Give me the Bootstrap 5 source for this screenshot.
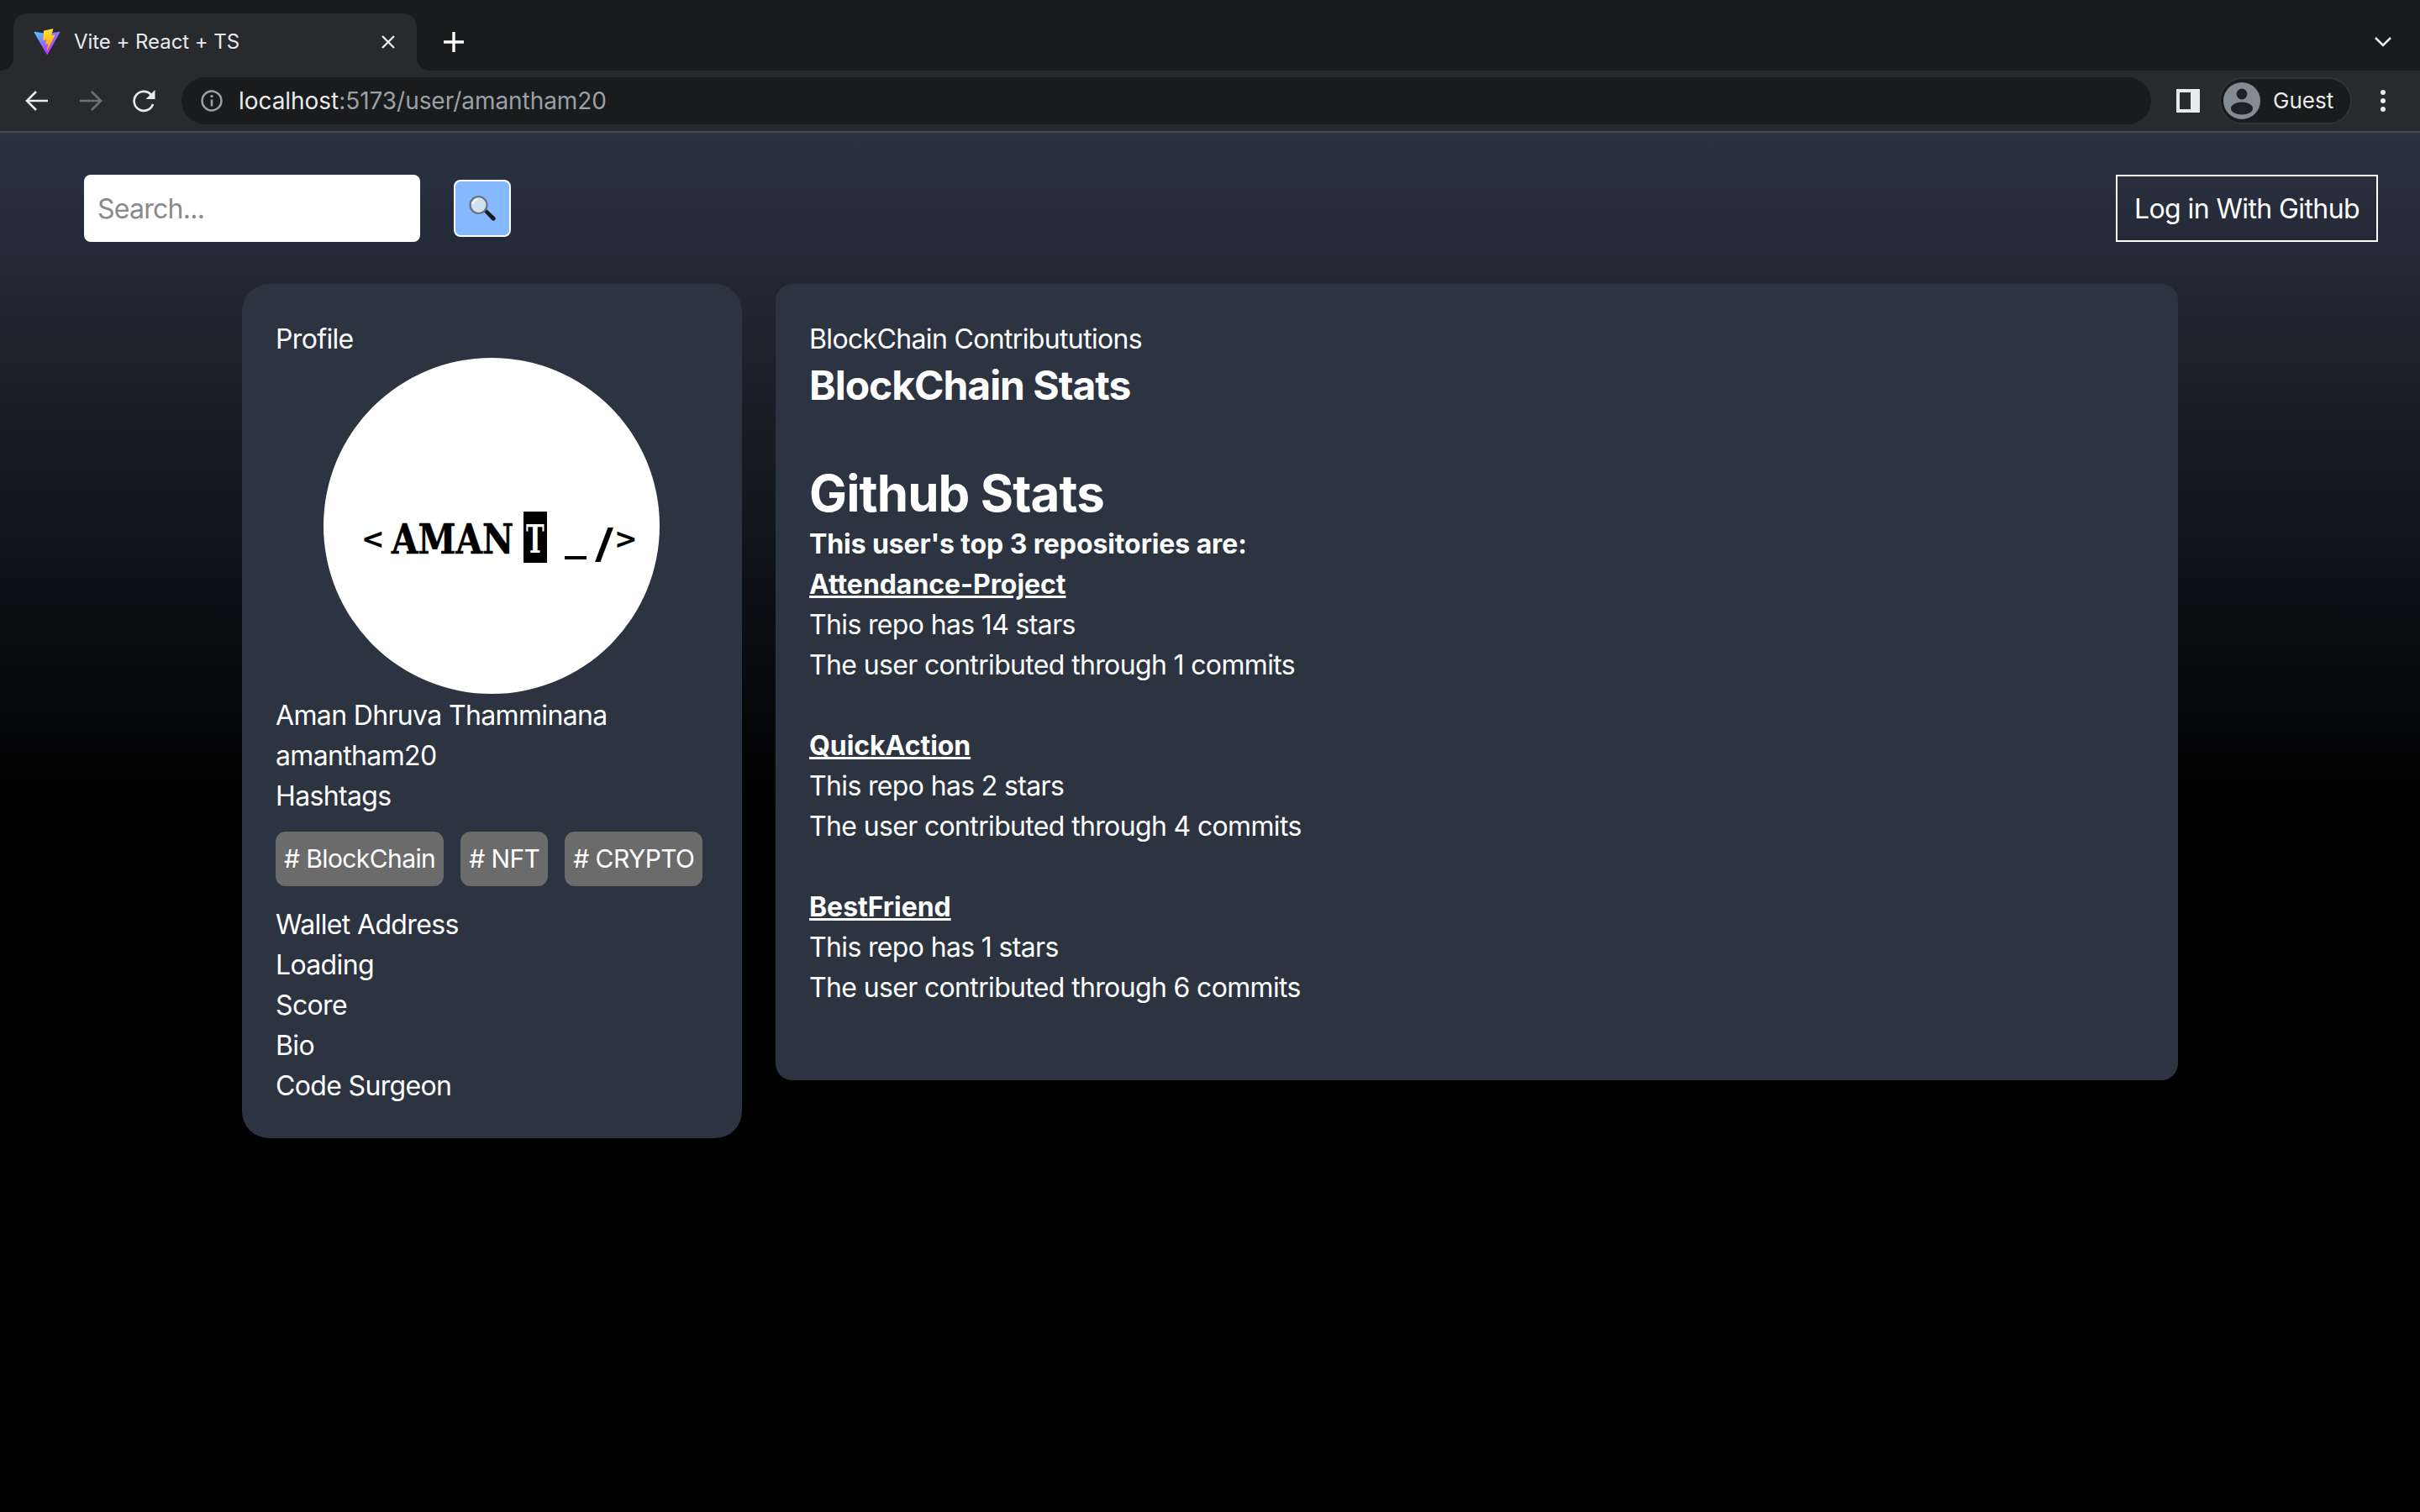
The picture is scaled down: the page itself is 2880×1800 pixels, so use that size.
<!DOCTYPE html>
<html lang="en">
<head>
  <meta charset="UTF-8">
  <title>Vite + React + TS</title>
  <link href="https://cdn.jsdelivr.net/npm/bootstrap@5.3.0/dist/css/bootstrap.min.css" rel="stylesheet">
  <style>
    html, body { height: 100%; }
    body {
      background: #000;
      color: #fff;
      font-family: Inter, "Liberation Sans", sans-serif;
      font-size: 32px;
      line-height: 48px;
      letter-spacing: -0.65px;
    }
    .browser-tabs { height: 84px; background: #1a1b1d; padding-left: 16px; }
    .browser-tab {
      position: relative;
      width: 480px;
      height: 68px;
      background: #292a2d;
      border-radius: 16px 16px 0 0;
      padding: 0 24px;
      gap: 16px;
      font-size: 24px;
      letter-spacing: -0.05px;
      color: #e8eaed;
    }
    .browser-tab::before, .browser-tab::after {
      content: "";
      position: absolute;
      bottom: 0;
      width: 16px;
      height: 16px;
    }
    .browser-tab::before { left: -16px; background: radial-gradient(circle at 0 0, #1a1b1d 16px, #292a2d 16.5px); }
    .browser-tab::after { right: -16px; background: radial-gradient(circle at 100% 0, #1a1b1d 16px, #292a2d 16.5px); }
    .tab-close { margin-left: auto; }
    .new-tab { margin-left: 30px; margin-bottom: 20px; }
    .tab-list { margin-left: auto; margin-right: 32px; margin-bottom: 26px; }
    .browser-bar {
      height: 74px;
      background: #292a2d;
      border-bottom: 2px solid #4a4b4e;
      padding: 0 26px 0 28px;
    }
    .nav-icon { width: 32px; height: 32px; margin-right: 32px; flex: none; }
    .omnibox {
      width: 2344px;
      height: 56px;
      margin-left: -4px;
      border-radius: 28px;
      background: #1a1b1d;
      padding-left: 22px;
      gap: 18px;
      font-size: 28px;
      letter-spacing: -0.05px;
      color: #9aa0a6;
    }
    .omnibox b { font-weight: 400; color: #e8eaed; }
    .side-panel { margin-left: 30px; flex: none; }
    .guest-pill {
      margin-left: 23px;
      width: 158px;
      height: 56px;
      border-radius: 28px;
      background: #1a1b1d;
      border: 2px solid #313235;
      padding-left: 3px;
      gap: 15px;
      font-size: 26px;
      letter-spacing: 0;
      color: #e8eaed;
    }
    .browser-menu { margin-left: 33px; flex: none; }

    .page-area {
      height: 1642px;
      background: linear-gradient(180deg, #2b3242 0, #000 800px);
    }
    .top-row { padding: 50px 50px 0 100px; }
    .search-box.form-control {
      width: 400px;
      height: 80px;
      padding: 16px;
      font-size: 32px;
      line-height: 48px;
      letter-spacing: -0.75px;
      border: 0;
      border-radius: 8px;
    }
    .search-box.form-control::placeholder { color: #8a8a8a; }
    .search-btn.btn {
      width: 68px;
      height: 68px;
      margin-left: 40px;
      padding: 0;
      background: #85b8ff;
      border: 2px solid #fff;
      border-radius: 8px;
    }
    .login-btn.btn {
      width: 312px;
      height: 80px;
      padding: 2px 0 0;
      color: #fff;
      background: transparent;
      border: 2px solid #fff;
      border-radius: 0;
      font-size: 32px;
      letter-spacing: -0.6px;
    }
    .cards-row { width: 2304px; margin: 50px auto 0; gap: 40px; }
    .info-card.card {
      background: #2d3441;
      color: #fff;
      border: 0;
      border-radius: 20px;
      padding: 40px;
    }
    .profile-card.card { width: 595px; border-radius: 32px; flex: none; }
    .text-line { height: 48px; line-height: 51px; }
    .avatar-img { display: block; width: 400px; height: 400px; margin-left: 57px; }
    .hash-tag {
      background: #6b6b6b;
      border-radius: 12px;
      padding: 8px 10px;
      font-size: 30px;
      letter-spacing: -0.6px;
      line-height: 49px;
      white-space: nowrap;
    }
    .tag-row { gap: 20px; margin: 20px 0; }
    .stats-title { height: 64px; font-size: 48px; line-height: 66px; letter-spacing: -1.05px; font-weight: 700; margin: 0 0 52px; }
    .github-title { height: 80px; font-size: 60px; line-height: 90px; letter-spacing: -0.9px; font-weight: 700; margin: 0; }
    .top-line { font-weight: 700; letter-spacing: -0.1px; }
    .repo-link { color: #fff; font-weight: 700; letter-spacing: -0.05px; text-decoration: underline; }
    .repo-block { margin-bottom: 48px; }
    .logo-word { font-family: "DejaVu Serif", serif; font-weight: 700; letter-spacing: 0; }
    .logo-sign { font-family: "DejaVu Sans", sans-serif; font-weight: 700; letter-spacing: 0; }
  </style>
</head>
<body>
  <div class="browser-tabs d-flex align-items-end">
    <div class="browser-tab d-flex align-items-center">
      <svg width="32" height="32" viewBox="0 0 410 404" fill="none">
        <path d="M399.641 59.5246L215.643 388.545C211.844 395.338 202.084 395.378 198.228 388.618L10.5817 59.5563C6.38087 52.1896 12.6802 43.2665 21.0281 44.7586L205.223 77.6824C206.398 77.8924 207.601 77.8904 208.776 77.6763L389.119 44.8058C397.439 43.2894 403.768 52.1434 399.641 59.5246Z" fill="url(#viteA)"/>
        <path d="M292.965 1.5744L156.801 28.2552C154.563 28.6937 152.906 30.5903 152.771 32.8664L144.395 174.33C144.198 177.662 147.258 180.248 150.51 179.498L188.42 170.749C191.967 169.931 195.172 173.055 194.443 176.622L183.18 231.775C182.422 235.487 185.907 238.661 189.532 237.56L212.947 230.446C216.577 229.344 220.065 232.527 219.297 236.242L201.398 322.875C200.278 328.294 207.486 331.249 210.492 326.603L212.5 323.5L323.454 102.072C325.312 98.3645 322.108 94.137 318.036 94.9228L279.014 102.454C275.347 103.161 272.227 99.746 273.262 96.1583L298.731 7.86689C299.767 4.27314 296.636 0.855181 292.965 1.5744Z" fill="url(#viteB)"/>
        <defs>
          <linearGradient id="viteA" x1="6" y1="33" x2="235" y2="344" gradientUnits="userSpaceOnUse"><stop stop-color="#41D1FF"/><stop offset="1" stop-color="#BD34FE"/></linearGradient>
          <linearGradient id="viteB" x1="194" y1="8.8" x2="236" y2="292" gradientUnits="userSpaceOnUse"><stop stop-color="#FFEA83"/><stop offset="0.08" stop-color="#FFDD35"/><stop offset="1" stop-color="#FFA800"/></linearGradient>
        </defs>
      </svg>
      <span>Vite + React + TS</span>
      <svg class="tab-close" width="20" height="20" viewBox="0 0 20 20"><path d="M3 3l14 14M17 3L3 17" stroke="#e8eaed" stroke-width="2.4"/></svg>
    </div>
    <svg class="new-tab" width="28" height="28" viewBox="0 0 28 28"><path d="M14 2v24M2 14h24" stroke="#fff" stroke-width="3.4"/></svg>
    <svg class="tab-list" width="24" height="16" viewBox="0 0 24 16"><path d="M3 3l9 9 9-9" fill="none" stroke="#e8eaed" stroke-width="2.6"/></svg>
  </div>

  <div class="browser-bar d-flex align-items-center">
    <svg class="nav-icon" viewBox="0 0 32 32"><path d="M29 16H5M15 5L4 16l11 11" fill="none" stroke="#e8eaed" stroke-width="2.6"/></svg>
    <svg class="nav-icon" viewBox="0 0 32 32"><path d="M3 16h24M17 5l11 11-11 11" fill="none" stroke="#6f7073" stroke-width="2.6"/></svg>
    <svg class="nav-icon" viewBox="0 0 32 32"><path d="M26 20a11.5 11.5 0 1 1-2.5-11.5L27 12" fill="none" stroke="#e8eaed" stroke-width="2.6"/><path d="M28.5 3v11h-11z" fill="#e8eaed"/></svg>
    <div class="omnibox d-flex align-items-center">
      <svg width="28" height="28" viewBox="0 0 28 28" class="flex-none"><circle cx="14" cy="14" r="11.5" fill="none" stroke="#9aa0a6" stroke-width="2.4"/><path d="M14 12.5v8" stroke="#9aa0a6" stroke-width="2.6"/><circle cx="14" cy="8.6" r="1.7" fill="#9aa0a6"/></svg>
      <span><b>localhost</b>:5173/user/amantham20</span>
    </div>
    <svg class="side-panel" width="28" height="28" viewBox="0 0 28 28"><path fill-rule="evenodd" d="M0 0h28v28H0zM4 4v20h13V4z" fill="#e8eaed"/></svg>
    <div class="guest-pill d-flex align-items-center">
      <svg width="44" height="44" viewBox="0 0 44 44" class="flex-none"><circle cx="22" cy="22" r="22" fill="#858b92"/><circle cx="22" cy="14" r="6.4" fill="#202124"/><ellipse cx="22" cy="31" rx="13" ry="7.5" fill="#202124"/></svg>
      <span>Guest</span>
    </div>
    <svg class="browser-menu" width="8" height="28" viewBox="0 0 8 28"><circle cx="4" cy="4" r="3" fill="#e8eaed"/><circle cx="4" cy="14" r="3" fill="#e8eaed"/><circle cx="4" cy="24" r="3" fill="#e8eaed"/></svg>
  </div>

  <div class="page-area">
    <div class="top-row d-flex align-items-center">
      <input class="search-box form-control" type="text" placeholder="Search...">
      <button class="search-btn btn d-flex align-items-center justify-content-center" type="button">
        <svg width="34" height="32" viewBox="0 0 34 32">
          <path d="M19 20l3-3 10 9.5c1 1 1 2.500 0 3.500s-2.500 1-3.500 0z" fill="#16181b"/>
          <circle cx="12.500" cy="12" r="10" fill="#d3e0f0" stroke="#68727d" stroke-width="2.200"/>
          <path d="M6 11c0-3 2.500-5.500 5.500-5.500" fill="none" stroke="#f4f8fc" stroke-width="1.800"/>
        </svg>
      </button>
      <button class="login-btn btn ms-auto" type="button">Log in With Github</button>
    </div>

    <div class="cards-row d-flex align-items-start">
      <div class="info-card profile-card card">
        <div class="text-line">Profile</div>
        <svg class="avatar-img" viewBox="0 0 400 400">
          <circle cx="200" cy="200" r="200" fill="#fff"/>
          <text class="logo-sign" x="45" y="227" font-size="33">&lt;</text>
          <text class="logo-word" transform="translate(81 233) scale(.83 1)" font-size="49" stroke="#000" stroke-width="0.7">AMAN</text>
          <rect x="238" y="183" width="28" height="61" fill="#000"/>
          <text class="logo-word" transform="translate(241 232) scale(.62 1)" font-size="47" fill="#fff">T</text>
          <rect x="287" y="236" width="26" height="4" fill="#000"/>
          <text class="logo-sign" x="323" y="238" font-size="50" textLength="22" lengthAdjust="spacingAndGlyphs">/</text>
          <text class="logo-sign" x="346" y="227" font-size="33">&gt;</text>
        </svg>
        <div class="text-line">Aman Dhruva Thamminana</div>
        <div class="text-line">amantham20</div>
        <div class="text-line">Hashtags</div>
        <div class="tag-row d-flex">
          <span class="hash-tag"># BlockChain</span>
          <span class="hash-tag"># NFT</span>
          <span class="hash-tag"># CRYPTO</span>
        </div>
        <div class="text-line">Wallet Address</div>
        <div class="text-line">Loading</div>
        <div class="text-line">Score</div>
        <div class="text-line">Bio</div>
        <div class="text-line">Code Surgeon</div>
      </div>

      <div class="info-card card flex-grow-1">
        <div class="text-line">BlockChain Contribututions</div>
        <h2 class="stats-title">BlockChain Stats</h2>
        <h1 class="github-title">Github Stats</h1>
        <div class="text-line top-line">This user's top 3 repositories are:</div>
        <div class="repo-block">
          <div class="text-line"><a class="repo-link" href="#">Attendance-Project</a></div>
          <div class="text-line">This repo has 14 stars</div>
          <div class="text-line">The user contributed through 1 commits</div>
        </div>
        <div class="repo-block">
          <div class="text-line"><a class="repo-link" href="#">QuickAction</a></div>
          <div class="text-line">This repo has 2 stars</div>
          <div class="text-line">The user contributed through 4 commits</div>
        </div>
        <div class="repo-block">
          <div class="text-line"><a class="repo-link" href="#">BestFriend</a></div>
          <div class="text-line">This repo has 1 stars</div>
          <div class="text-line">The user contributed through 6 commits</div>
        </div>
      </div>
    </div>
  </div>

  <script src="https://cdn.jsdelivr.net/npm/bootstrap@5.3.0/dist/js/bootstrap.bundle.min.js"></script>
</body>
</html>
